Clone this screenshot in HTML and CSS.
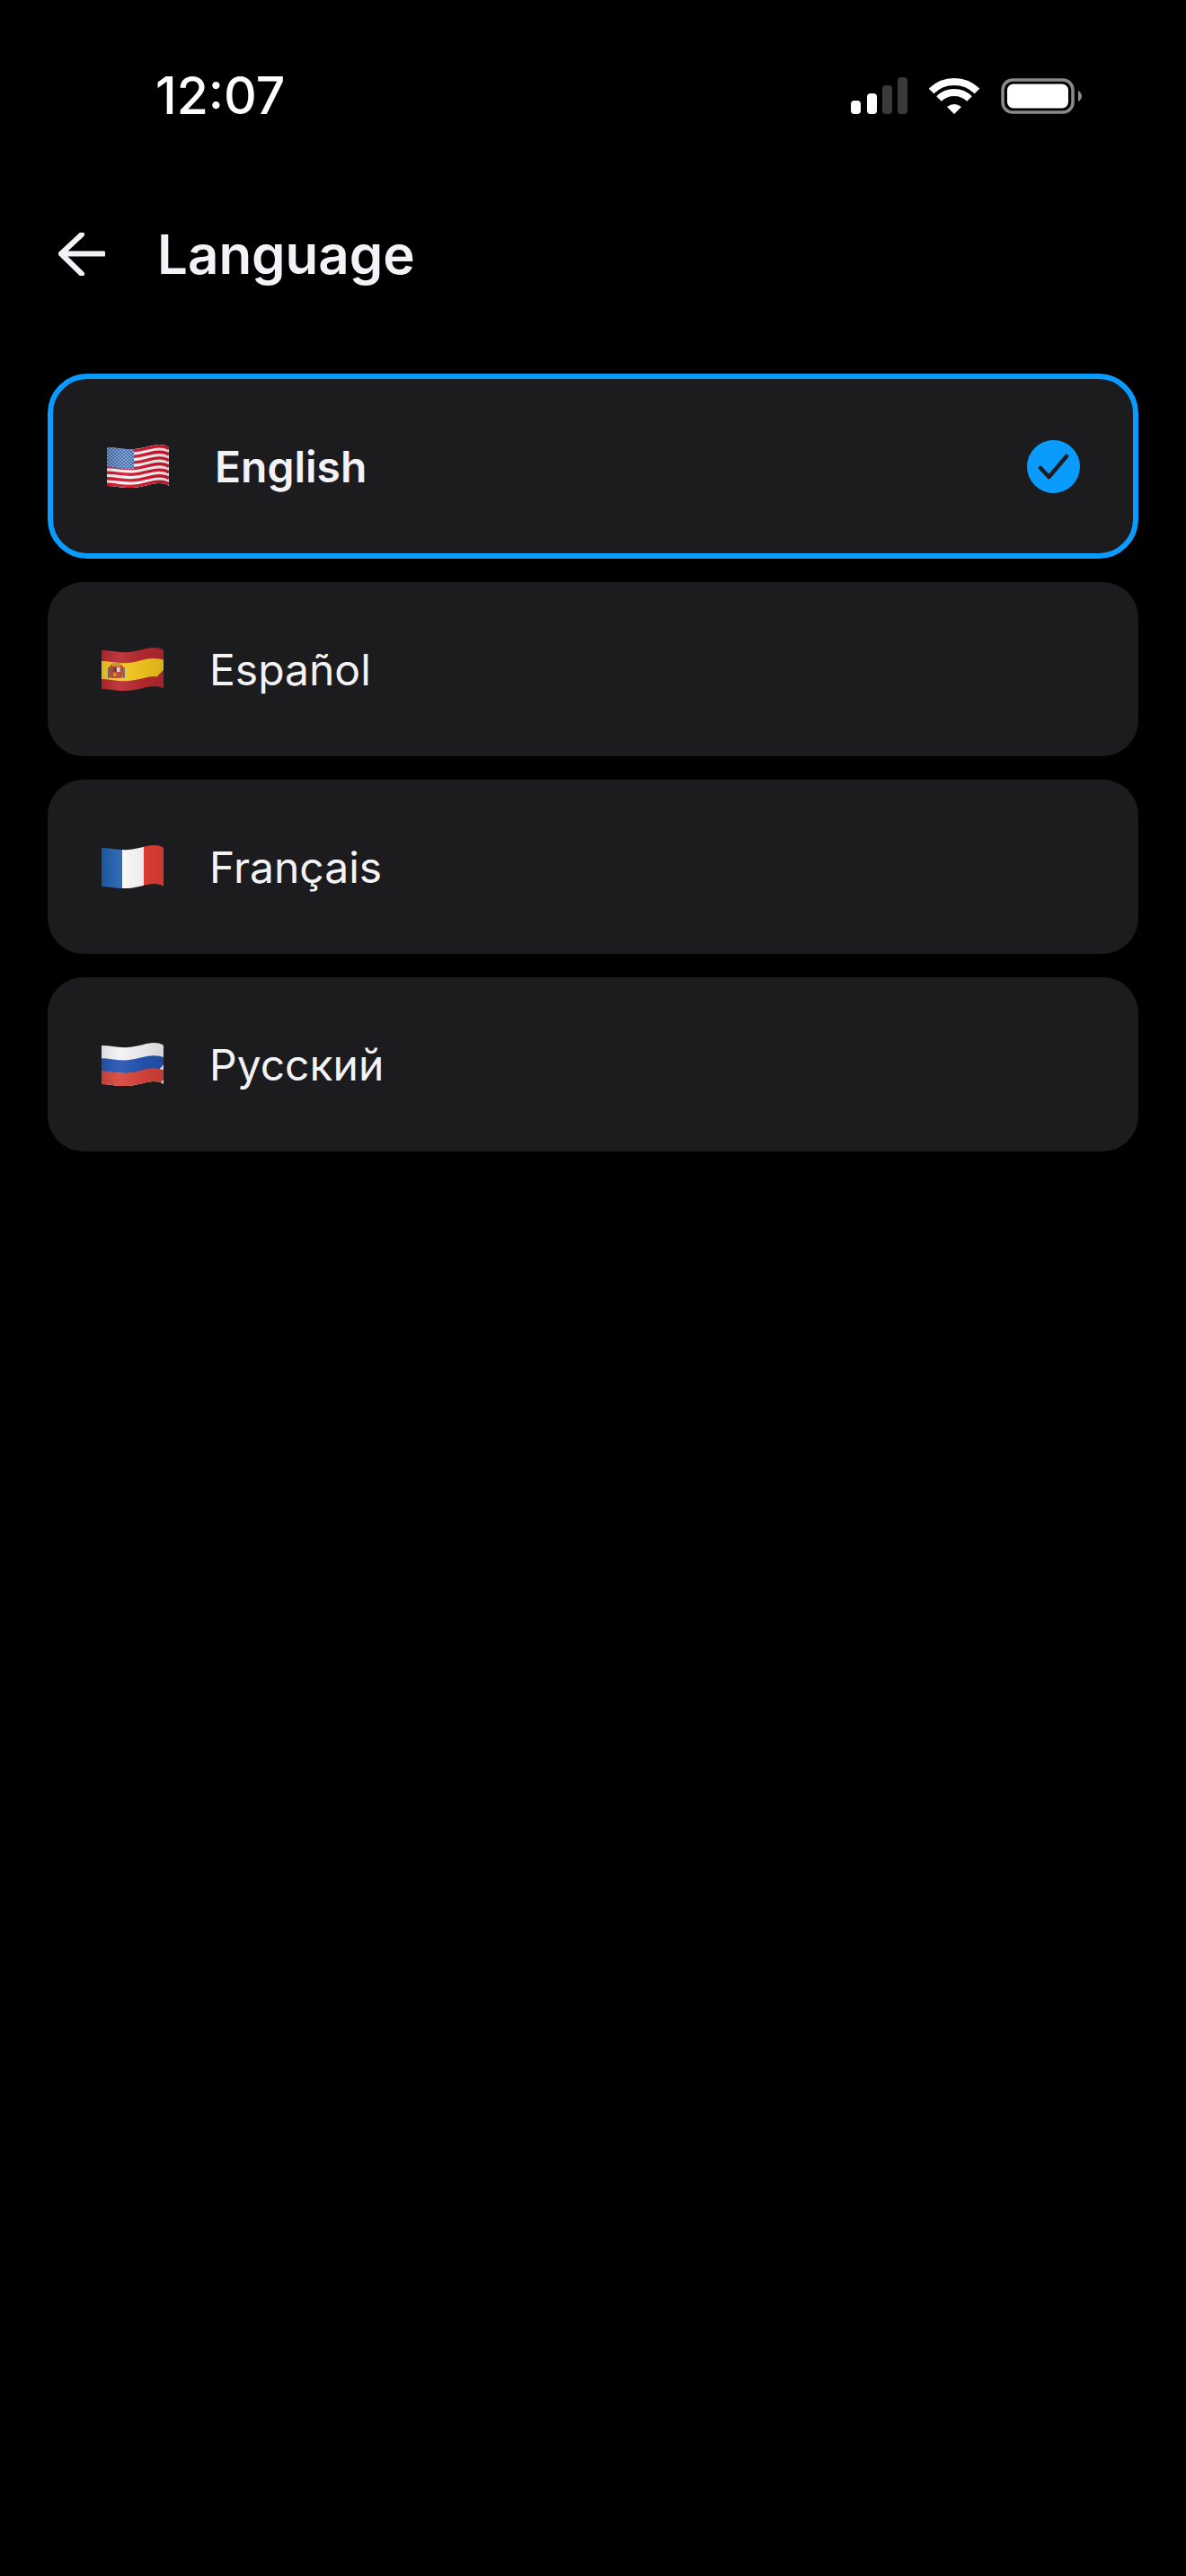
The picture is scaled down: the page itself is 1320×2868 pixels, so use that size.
FILE: index.html
```html
<!DOCTYPE html>
<html lang="en">
<head>
<meta charset="utf-8">
<title>Language</title>
<link rel="stylesheet" href="styles.css">
</head>
<body>
<svg class="defs" width="0" height="0" aria-hidden="true">
  <defs>
    <clipPath id="wave"><path d="M0 3C10 3 18 6 30 5C42 4 50 0 58 0C63 0 67 1 69 3L69 46C67 44 63 43 58 43C50 43 42 47 30 48C18 49 10 46 0 46Z"/></clipPath>
    <linearGradient id="shade" x1="0" y1="0" x2="1" y2="0">
      <stop offset="0" stop-color="#000" stop-opacity=".1"/>
      <stop offset=".3" stop-color="#fff" stop-opacity=".08"/>
      <stop offset=".7" stop-color="#000" stop-opacity=".06"/>
      <stop offset="1" stop-color="#000" stop-opacity=".12"/>
    </linearGradient>
    <pattern id="stars" width="4" height="3.6" patternUnits="userSpaceOnUse">
      <circle cx="1" cy="1" r=".8" fill="#dfe8f5"/>
      <circle cx="3" cy="2.8" r=".8" fill="#dfe8f5"/>
    </pattern>
  </defs>
</svg>
<main class="screen">
  <div class="status">
    <span class="time">12:07</span>
    <div class="status-icons">
      <svg class="signal" viewBox="0 0 63 41">
        <rect x="0" y="26" width="11" height="15" rx="4" fill="#fff"/>
        <rect x="18" y="18" width="11" height="23" rx="4" fill="#fff"/>
        <rect x="35" y="9" width="11" height="32" rx="4" fill="#3a3a3c"/>
        <rect x="52" y="0" width="11" height="41" rx="4" fill="#3a3a3c"/>
      </svg>
      <svg class="wifi" viewBox="0 0 56 41">
        <path d="M2.5 15.5A36 36 0 0 1 53.5 15.5" fill="none" stroke="#fff" stroke-width="8"/>
        <path d="M11 24A24 24 0 0 1 45 24" fill="none" stroke="#fff" stroke-width="8"/>
        <path d="M20 33Q28 27 36 33L28 41Z" fill="#fff"/>
      </svg>
      <svg class="battery" viewBox="0 0 90 40">
        <rect x="2" y="2" width="78" height="36" rx="11" fill="none" stroke="#8a8a8c" stroke-width="3.5"/>
        <rect x="7" y="6.5" width="68" height="27" rx="7" fill="#fff"/>
        <path d="M86 14C88.500 15 90 17.500 90 20C90 22.500 88.500 25 86 26Z" fill="#8a8a8c"/>
      </svg>
    </div>
  </div>

  <header class="header">
    <svg class="back" viewBox="0 0 52 48">
      <path d="M50 23.500H3M26 2L3 23.500L26 46" fill="none" stroke="#f2f2f7" stroke-width="6" stroke-linecap="round" stroke-linejoin="round"/>
    </svg>
    <h1 class="title">Language</h1>
  </header>

  <ul class="list">
    <li class="item item-selected">
      <svg class="flag" viewBox="0 0 69 48">
        <g clip-path="url(#wave)">
          <rect width="69" height="48" fill="#f4f4f6"/>
          <g fill="none" stroke="#d3182f" stroke-width="3.4">
            <path d="M0 4.700C10 4.700 18 7.700 30 6.700C42 5.700 50 1.700 58 1.700C63 1.700 67 2.700 69 4.700"/>
            <path d="M0 11.300C10 11.300 18 14.300 30 13.300C42 12.300 50 8.300 58 8.300C63 8.300 67 9.300 69 11.300"/>
            <path d="M0 17.900C10 17.900 18 20.900 30 19.900C42 18.900 50 14.900 58 14.900C63 14.900 67 15.900 69 17.900"/>
            <path d="M0 24.500C10 24.500 18 27.500 30 26.500C42 25.500 50 21.500 58 21.500C63 21.500 67 22.500 69 24.500"/>
            <path d="M0 31.100C10 31.100 18 34.100 30 33.100C42 32.100 50 28.100 58 28.100C63 28.100 67 29.100 69 31.100"/>
            <path d="M0 37.700C10 37.700 18 40.700 30 39.700C42 38.700 50 34.700 58 34.700C63 34.700 67 35.700 69 37.700"/>
            <path d="M0 44.300C10 44.300 18 47.300 30 46.300C42 45.300 50 41.300 58 41.300C63 41.300 67 42.300 69 44.300"/>
          </g>
          <path d="M0 3C10 3 18 6 30 5L30 27C18 28 10 25 0 25Z" fill="#2f62a8"/>
          <path d="M0 3C10 3 18 6 30 5L30 27C18 28 10 25 0 25Z" fill="url(#stars)"/>
          <rect width="69" height="48" fill="url(#shade)"/>
        </g>
      </svg>
      <span class="name name-selected">English</span>
      <svg class="check" viewBox="0 0 59 59">
        <circle cx="29.500" cy="29.500" r="29.500" fill="#0a9bff"/>
        <path d="M15 31L24.500 41L44 18" fill="none" stroke="#1c1c1e" stroke-width="4.500" stroke-linecap="round" stroke-linejoin="round"/>
      </svg>
    </li>
    <li class="item">
      <svg class="flag" viewBox="0 0 69 48">
        <g clip-path="url(#wave)">
          <rect width="69" height="48" fill="#b8292f"/>
          <path d="M0 25C10 25 18 28 30 27C42 26 50 22 58 22C63 22 67 23 69 25" fill="none" stroke="#f6c71e" stroke-width="20"/>
          <rect x="9" y="19" width="15" height="15" rx="3" fill="#b5432a"/>
          <rect x="11" y="17" width="11" height="4" rx="2" fill="#c9922a"/>
          <rect x="13" y="22" width="3.500" height="5" fill="#7d2a28"/>
          <rect x="17" y="22" width="3.500" height="5" fill="#d8d4dc"/>
          <rect x="13" y="28" width="3.500" height="4" fill="#d8872a"/>
          <rect x="7" y="22" width="2" height="12" fill="#5d6f86"/>
          <rect x="24" y="22" width="2" height="12" fill="#5d6f86"/>
          <rect width="69" height="48" fill="url(#shade)"/>
        </g>
      </svg>
      <span class="name">Español</span>
    </li>
    <li class="item">
      <svg class="flag" viewBox="0 0 69 48">
        <g clip-path="url(#wave)">
          <rect x="0" width="23" height="48" fill="#1f5fae"/>
          <rect x="23" width="24" height="48" fill="#fafafc"/>
          <rect x="47" width="22" height="48" fill="#e63f36"/>
          <rect width="69" height="48" fill="url(#shade)"/>
        </g>
      </svg>
      <span class="name">Français</span>
    </li>
    <li class="item">
      <svg class="flag" viewBox="0 0 69 48">
        <g clip-path="url(#wave)">
          <rect width="69" height="48" fill="#f4f4f6"/>
          <path d="M0 24.500C10 24.500 18 27.500 30 26.500C42 25.500 50 21.500 58 21.500C63 21.500 67 22.500 69 24.500" fill="none" stroke="#2454b4" stroke-width="14.500"/>
          <path d="M0 41C10 41 18 44 30 43C42 42 50 38 58 38C63 38 67 39 69 41" fill="none" stroke="#d8443a" stroke-width="19"/>
          <rect width="69" height="48" fill="url(#shade)"/>
        </g>
      </svg>
      <span class="name">Русский</span>
    </li>
  </ul>
</main>
</body>
</html>
```
FILE: styles.css
```css
* {
  box-sizing: border-box;
}

html,
body {
  margin: 0;
  padding: 0;
  background: #000;
}

body {
  font-family: Inter, "Liberation Sans", sans-serif;
  color: #f2f2f7;
}

.defs {
  display: block;
  height: 0;
}

.screen {
  width: 1320px;
  height: 2868px;
  background: #000;
  overflow: hidden;
}

.status {
  display: flex;
  align-items: center;
  justify-content: space-between;
  height: 213px;
  padding: 0 116px 0 173px;
}

.time {
  font-size: 57px;
  font-weight: 500;
  color: #fff;
}

.status-icons {
  display: flex;
  align-items: center;
  gap: 24px;
}

.signal {
  display: block;
  width: 63px;
  height: 41px;
}

.wifi {
  display: block;
  width: 56px;
  height: 41px;
}

.battery {
  display: block;
  width: 90px;
  height: 40px;
}

.header {
  display: flex;
  align-items: center;
  gap: 58px;
  height: 140px;
  padding-left: 65px;
}

.back {
  display: block;
  width: 52px;
  height: 48px;
  flex: none;
}

.title {
  margin: 0;
  font-size: 60px;
  font-weight: 600;
  line-height: 1.2;
}

.list {
  display: flex;
  flex-direction: column;
  gap: 26px;
  list-style: none;
  margin: 63px 53px 0;
  padding: 0;
}

.item {
  display: flex;
  align-items: center;
  gap: 51px;
  height: 194px;
  padding: 0 59px 0 60px;
  background: #1c1c1e;
  border-radius: 40px;
}

.item-selected {
  height: 206px;
  border: 6px solid #0a9bff;
  border-radius: 44px;
}

.flag {
  display: block;
  width: 69px;
  height: 48px;
  flex: none;
}

.name {
  flex: 1;
  font-size: 48px;
  font-weight: 400;
}

.name-selected {
  font-weight: 600;
}

.check {
  display: block;
  width: 59px;
  height: 59px;
  flex: none;
}
```
